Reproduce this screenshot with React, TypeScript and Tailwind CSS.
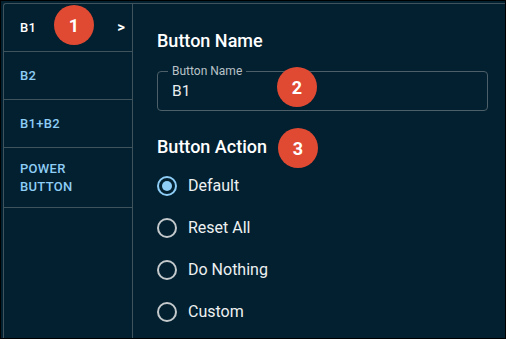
const navItems = [
  { label: 'B1', active: true },
  { label: 'B2' },
  { label: 'B1+B2' },
  { label: 'POWER BUTTON' },
];

const actions = ['Default', 'Reset All', 'Do Nothing', 'Custom'];

const Badge = ({ n }: { n: number }) => (
  <span className="flex h-[40px] w-[40px] shrink-0 items-center justify-center rounded-full bg-[#e04a33] text-[18px] font-bold text-white">
    {n}
  </span>
);

const App = () => {
  return (
    <div
      className="h-[339px] w-[506px] overflow-hidden border border-black bg-[#022030] pl-[2px] pt-[2px]"
      style={{ fontFamily: 'Roboto, "Liberation Sans", sans-serif' }}
    >
      <div className="flex h-full rounded-tl-[3px] border-l border-t border-[#3f535d]">
        {/* side nav */}
        <div className="w-[129px] shrink-0 border-r border-[#3f535d]">
          {navItems.map((item) => (
            <div
              key={item.label}
              className={`relative flex items-center justify-between border-b border-[#3f535d] pl-[16px] pr-[7px] ${
                item.label === 'POWER BUTTON' ? 'h-[60px]' : 'h-[48px]'
              }`}
            >
              <span
                className={`w-[70px] text-[13px] font-medium leading-[18px] tracking-[0.3px] ${
                  item.active ? 'text-white' : 'text-[#8ecdf5]'
                }`}
              >
                {item.label}
              </span>
              {item.active && (
                <>
                  <div className="absolute left-[50px] top-[1px]">
                    <Badge n={1} />
                  </div>
                  <span className="text-[15px] font-bold text-white">&gt;</span>
                </>
              )}
            </div>
          ))}
        </div>

        {/* form */}
        <div className="flex-1 pl-[24px] pr-[17px] pt-[26px]">
          <h2 className="text-[18px] font-medium leading-[22px] text-white">Button Name</h2>

          <div className="relative mt-[19px] h-[40px] rounded-[4px] border border-[#4d5f68]">
            <span className="absolute -top-[8px] left-[10px] bg-[#022030] px-[4px] text-[12px] leading-[14px] text-[#b9c2c7]">
              Button Name
            </span>
            <span className="absolute left-[14px] top-[10px] text-[15.5px] leading-[18px] text-[#e8ecee]">B1</span>
            <div className="absolute left-[119px] top-[-5px]">
              <Badge n={2} />
            </div>
          </div>

          <div className="mt-[17px] flex h-[40px] items-center gap-[11px]">
            <h2 className="mb-[2px] text-[18px] font-medium leading-[22px] text-white">Button Action</h2>
            <Badge n={3} />
          </div>

          <div className="mt-[-3px] flex flex-col">
            {actions.map((a, i) => (
              <div key={a} className="flex h-[42px] items-center gap-[11px]">
                {i === 0 ? (
                  <span className="flex h-[20px] w-[20px] items-center justify-center rounded-full border-2 border-[#8ecdf5]">
                    <span className="h-[10px] w-[10px] rounded-full bg-[#8ecdf5]" />
                  </span>
                ) : (
                  <span className="h-[20px] w-[20px] rounded-full border-2 border-[#c4c9cc]" />
                )}
                <span className="text-[16px] text-[#eef1f2]">{a}</span>
              </div>
            ))}
          </div>
        </div>
      </div>
    </div>
  );
};

export default App;
